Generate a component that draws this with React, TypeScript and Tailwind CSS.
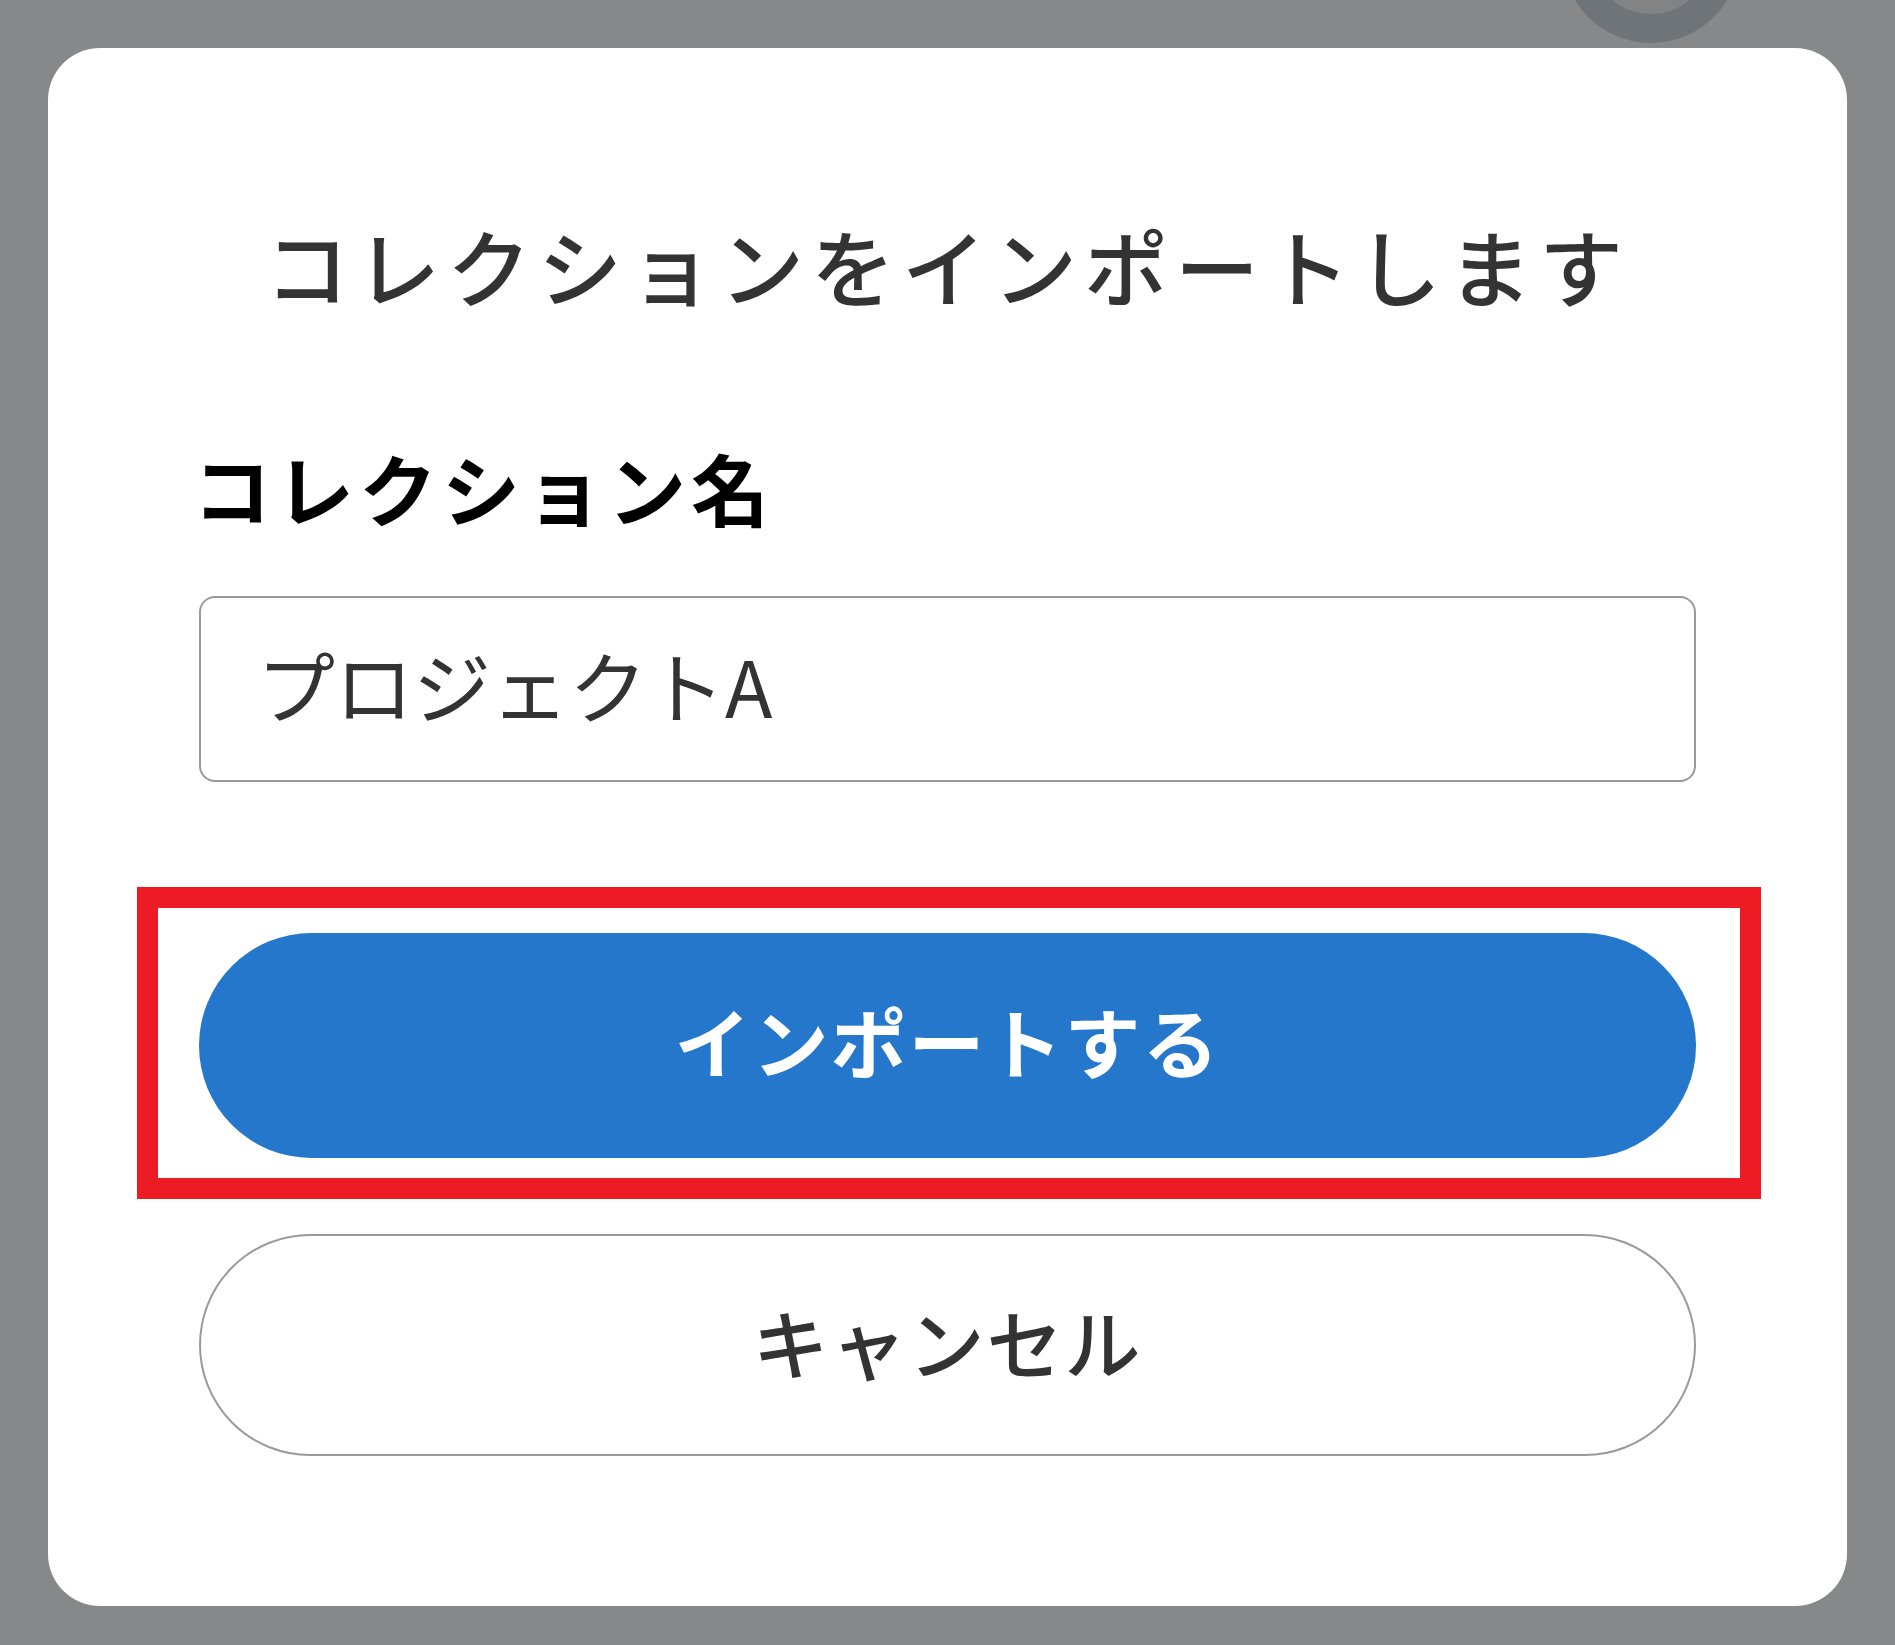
import React from "react";

const jp = "font-['Noto_Sans_CJK_JP','Noto_Sans',sans-serif]";

export default function App() {
  return (
    <div className={`relative min-h-[1645px] w-full overflow-hidden bg-[#87888a] px-[48px] pt-[48px] ${jp}`}>
      {/* dimmed close button peeking above the dialog */}
      <div className="absolute left-[1562px] top-[-135px] h-[178px] w-[178px] rounded-full border-[29px] border-[#6f7478] bg-[#818385]" />

      <div className="relative flex h-[1558px] flex-col rounded-[52px] bg-white px-[151px]">
        <h1 className="mt-[175px] text-center text-[84px] font-medium leading-none tracking-[7px] text-[#333333]">
          コレクションをインポートします
        </h1>

        <label className="-ml-[6px] mt-[141px] text-[78px] font-bold leading-none tracking-[5px] text-black">
          コレクション名
        </label>

        <div className="mt-[70px] flex h-[186px] items-center rounded-[16px] border-2 border-[#9a9a9a] px-[56px] pb-[10px]">
          <span className="text-[78px] leading-none text-[#333333]">プロジェクトA</span>
        </div>

        <div className="relative mt-[151px]">
          <button className="flex h-[225px] w-full items-center justify-center rounded-full bg-[#2477cb] pb-[12px] text-[76px] font-semibold leading-none tracking-[2px] text-white">
            インポートする
          </button>
          {/* highlight frame around the primary action */}
          <span className="pointer-events-none absolute bottom-[-41px] left-[-62px] right-[-65px] top-[-46px] border-[21px] border-[#ed1c24]" />
        </div>

        <button className="mt-[76px] flex h-[222px] w-full items-center justify-center rounded-full border-2 border-[#9a9a9a] bg-white pb-[8px] text-[76px] font-medium leading-none tracking-[2px] text-[#333333]">
          キャンセル
        </button>
      </div>
    </div>
  );
}
